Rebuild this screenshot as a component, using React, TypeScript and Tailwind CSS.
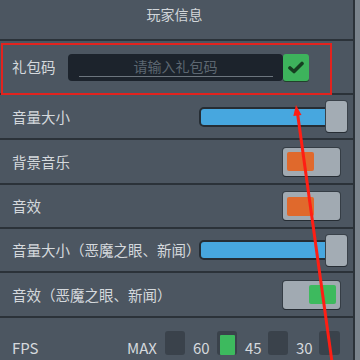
import React from 'react'

const font = { fontFamily: '"Noto Sans CJK SC", "Noto Sans", sans-serif' }

function Toggle({ on, color }: { on: boolean; color: string }) {
  return (
    <div
      className={`w-[57px] h-[28px] rounded-[3px] bg-[#a1aab2] shadow-[0_1px_0_#262d34,0_0_0_1px_#353d45] flex items-center px-[4px] ${
        on ? 'justify-end' : 'justify-start'
      }`}
    >
      <div className={`w-[27px] h-[19px] rounded-[2px] ${color}`} />
    </div>
  )
}

function Slider() {
  return (
    <div className="flex items-center">
      <div className="w-[132px] h-[20px] rounded-[5px] bg-[#47a7df] border-2 border-[#262d34]" />
      <div className="-ml-[5px] w-[21px] h-[31px] rounded-[3px] bg-[#a3acb4] shadow-[0_1px_0_#262d34,0_0_0_1px_#3a424a]" />
    </div>
  )
}

function Row({ label, height, children }: { label: string; height: string; children?: React.ReactNode }) {
  return (
    <div className={`${height} border-b-2 border-[#2b3239] flex items-center justify-between pl-[12px]`}>
      <span className="text-[14.5px] text-[#d5d9dd]">{label}</span>
      {children}
    </div>
  )
}

export default function App() {
  return (
    <div className="relative w-[360px] h-[360px] overflow-hidden bg-[#4c5661] flex" style={font}>
      <div className="flex-1 flex flex-col">
        {/* タイトル */}
        <div className="h-[43px] border-b-2 border-[#2b3239] flex justify-center pt-[4px]">
          <span className="text-[14px] text-[#d2d6da] ml-[-4px]">玩家信息</span>
        </div>

        {/* 礼包码 */}
        <div className="h-[56px] border-b-2 border-[#2b3239] flex items-center pl-[12px]">
          <span className="text-[14.5px] text-[#d5d9dd] w-[56px]">礼包码</span>
          <div className="w-[215px] h-[27px] rounded-[4px] bg-[#1c232c] flex flex-col items-center justify-center relative">
            <span className="text-[14px] text-[#5d6771] leading-none mb-[3px]">请输入礼包码</span>
            <div className="absolute left-[11px] right-[10px] bottom-[4px] h-px bg-[#6c757e]" />
          </div>
          <div className="w-[26px] h-[27px] rounded-[3px] bg-[#3db35c] shadow-[0_1px_0_#23402c] flex items-center justify-center">
            <svg width="16" height="13" viewBox="0 0 16 13">
              <path d="M2 7 L6 10.5 L14 2.5" fill="none" stroke="#163f21" strokeWidth="3.6" strokeLinecap="round" strokeLinejoin="round" />
            </svg>
          </div>
        </div>

        <Row label="音量大小" height="h-[47px]">
          <div className="mr-[6px]">
            <Slider />
          </div>
        </Row>
        <Row label="背景音乐" height="h-[47px]">
          <div className="mr-[13px]">
            <Toggle on={false} color="bg-[#e0692c]" />
          </div>
        </Row>
        <Row label="音效" height="h-[46px]">
          <div className="mr-[13px]">
            <Toggle on={false} color="bg-[#e0692c]" />
          </div>
        </Row>
        <Row label="音量大小（恶魔之眼、新闻）" height="h-[46px]">
          <div className="mr-[6px]">
            <Slider />
          </div>
        </Row>
        <Row label="音效（恶魔之眼、新闻）" height="h-[47px]">
          <div className="mr-[13px]">
            <Toggle on={true} color="bg-[#3dba5e]" />
          </div>
        </Row>

        {/* FPS */}
        <div className="flex-1 flex items-start pl-[12px] pt-[13px] text-[15px] text-[#d5d9dd]">
          <span className="w-[115px] mt-[6px]">FPS</span>
          <span className="w-[38px] mt-[6px]">MAX</span>
          <div className="w-[20px] h-[24px] rounded-[3px] bg-[#3a424b]" />
          <span className="ml-[8px] w-[24px] mt-[6px]">60</span>
          <div className="w-[20px] h-[24px] rounded-[3px] bg-[#3a424b] flex items-end justify-center">
            <div className="w-[15px] h-[20px] bg-[#3dba5e] rounded-[1px]" />
          </div>
          <span className="ml-[8px] w-[23px] mt-[6px]">45</span>
          <div className="w-[20px] h-[24px] rounded-[3px] bg-[#3a424b]" />
          <span className="ml-[8px] w-[23px] mt-[6px]">30</span>
          <div className="w-[21px] h-[24px] rounded-[3px] bg-[#3a424b]" />
        </div>
      </div>

      {/* 右端 */}
      <div className="w-[2px] bg-[#2b3239]" />
      <div className="w-[5px] bg-[#7a838c]" />

      {/* 注釈 */}
      <div className="absolute left-[1px] top-[43px] w-[331px] h-[52px] border-2 border-[#e3231e] pointer-events-none" />
      <svg className="absolute inset-0 pointer-events-none" width="360" height="360" viewBox="0 0 360 360">
        <line x1="297.6" y1="114" x2="332" y2="362" stroke="#ff1e14" strokeWidth="3" />
        <polygon points="296,105 301.5,115 293.3,116" fill="#ff1e14" />
      </svg>
    </div>
  )
}
